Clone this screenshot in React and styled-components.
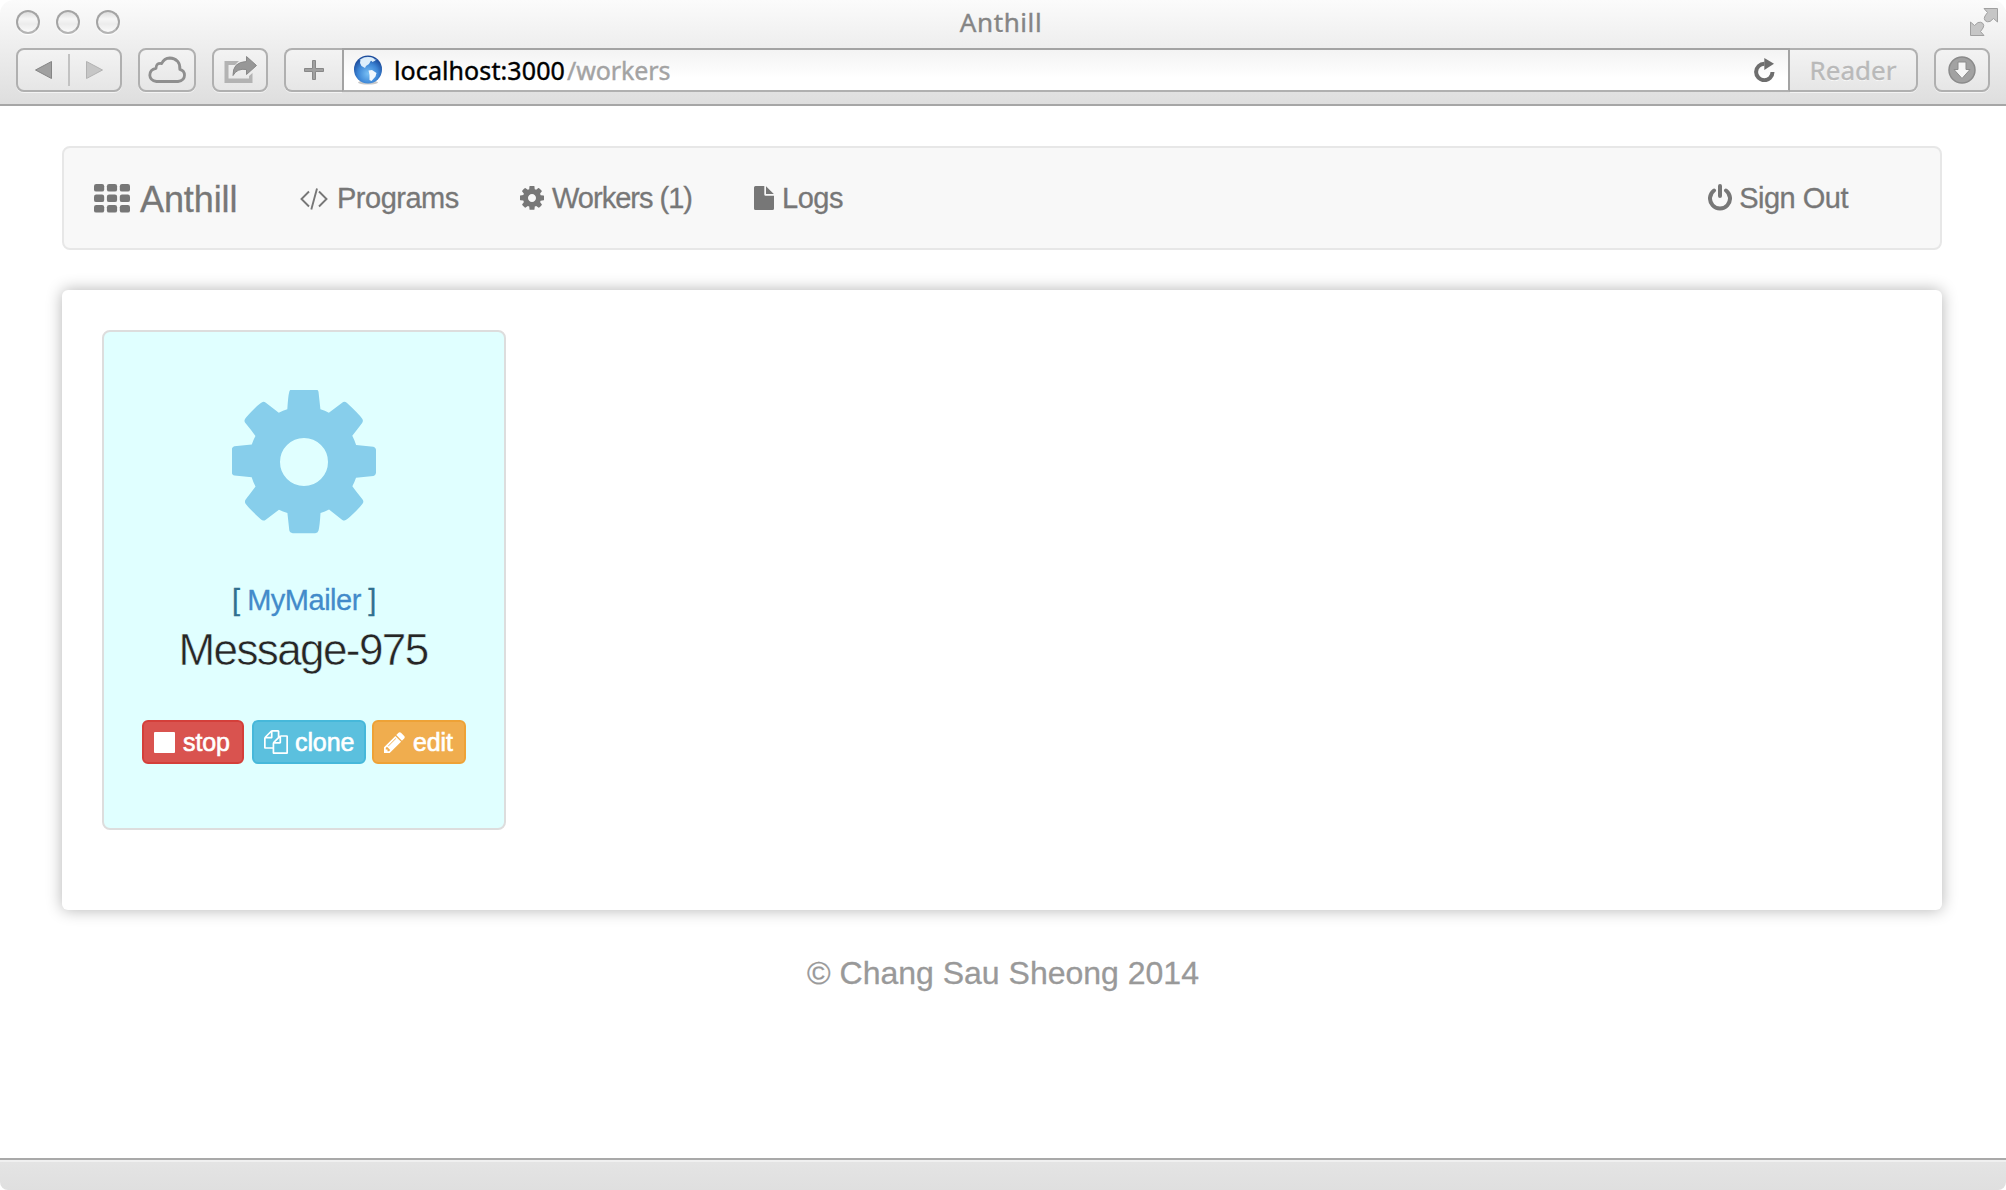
import React from "react";
import styled, { createGlobalStyle } from "styled-components";

const GlobalStyle = createGlobalStyle`
  * { box-sizing: border-box; }
  html, body { margin: 0; padding: 0; background: #fff; }
  body { font-family: "Liberation Sans", Arial, sans-serif; overflow: hidden; }
  svg { display: block; flex: none; }
`;

const Window = styled.div`
  display: flex;
  flex-direction: column;
  width: 2006px;
  height: 1190px;
  border-radius: 14px 14px 8px 8px;
  overflow: hidden;
  background: #fff;
`;

const Chrome = styled.header`
  display: flex;
  flex-direction: column;
  height: 106px;
  flex: none;
  border-bottom: 2px solid #a6a6a6;
  background: linear-gradient(#fbfbfb, #f0f0f0 38%, #dedede);
  font-family: "Noto Sans", sans-serif;
`;

const TitleBar = styled.div`
  display: grid;
  grid-template-columns: 1fr auto 1fr;
  align-items: center;
  height: 48px;
  padding: 0 4px 4px 0;
`;

const Lights = styled.div`
  display: flex;
  gap: 16px;
  padding-left: 16px;
`;

const Light = styled.span`
  width: 24px;
  height: 24px;
  border-radius: 50%;
  border: 2px solid #a4a4a4;
  border-bottom-color: #b4b4b4;
  background: linear-gradient(#dedede, #f6f6f6 35%, #ececec 60%, #fafafa);
  box-shadow: 0 1px 1px #fff;
`;

const Title = styled.div`
  font-size: 26px;
  line-height: 36px;
  letter-spacing: 0.6px;
  color: #858585;
  text-shadow: 0 1px 0 #fff;
  -webkit-text-stroke: 0.4px #858585;
`;

const TitleEnd = styled.div`
  display: flex;
  justify-content: flex-end;
  padding-right: 4px;
`;

const Toolbar = styled.div`
  display: flex;
  gap: 16px;
  height: 44px;
  padding: 0 16px;
`;

const ToolButton = styled.div`
  display: flex;
  align-items: center;
  justify-content: center;
  width: ${(p) => p.$width}px;
  height: 44px;
  border: 2px solid #b0b0b0;
  border-radius: 8px;
  background: linear-gradient(#f3f3f3, #e6e6e6);
  box-shadow: 0 1px 0 #f3f3f3;
`;

const Divider = styled.span`
  width: 2px;
  height: 32px;
  margin: 0 16px;
  background: #c2c2c2;
`;

const AddressGroup = styled.div`
  display: flex;
  flex: 1;
`;

const AddTab = styled(ToolButton)`
  border-right: 0;
  border-radius: 8px 0 0 8px;
`;

const AddressField = styled.div`
  display: flex;
  align-items: center;
  flex: 1;
  border: 2px solid #a3a3a3;
  border-bottom-color: #b0b0b0;
  background: linear-gradient(#f3f3f3, #fff 70%);
  padding: 0 13px 0 9px;
`;

const Url = styled.div`
  flex: 1;
  padding-left: 11px;
  font-size: 25px;
  line-height: 40px;
  letter-spacing: 0.1px;
  color: #000;
  -webkit-text-stroke: 0.4px currentColor;
`;

const UrlPath = styled.span`
  margin-left: 2px;
  letter-spacing: -0.1px;
  color: #a3a3a3;
`;

const Reader = styled(ToolButton)`
  border-left: 0;
  border-radius: 0 8px 8px 0;
  font-size: 26px;
  color: #b9b9b9;
  text-shadow: 0 1px 0 #fff;
  -webkit-text-stroke: 0.4px #b9b9b9;
`;

const Page = styled.main`
  display: flex;
  flex-direction: column;
  flex: 1;
  padding: 40px 64px 0 62px;
`;

const Navbar = styled.nav`
  display: flex;
  align-items: center;
  height: 104px;
  padding: 0 92px 0 30px;
  border: 2px solid #e7e7e7;
  border-radius: 8px;
  background: #f8f8f8;
  color: #777;
`;

const Brand = styled.div`
  display: flex;
  align-items: center;
  gap: 10px;
  width: 206px;
  font-size: 36px;
  line-height: 40px;
  letter-spacing: -0.1px;
  -webkit-text-stroke: 0.3px #777;
`;

const Label = styled.span`
  padding-top: ${(p) => p.$drop ?? 0}px;
`;

const NavItem = styled.div`
  display: flex;
  align-items: center;
  gap: ${(p) => p.$gap ?? 8}px;
  width: ${(p) => (p.$width ? `${p.$width}px` : "auto")};
  margin-left: ${(p) => (p.$end ? "auto" : "0")};
  font-size: 29px;
  line-height: 40px;
  letter-spacing: ${(p) => p.$track ?? -0.5}px;
  white-space: nowrap;
  -webkit-text-stroke: 0.3px #777;
`;

const Panel = styled.section`
  height: 620px;
  margin-top: 40px;
  padding: 40px;
  border-radius: 6px;
  background: #fff;
  box-shadow: 0 0 16px rgba(0, 0, 0, 0.3);
`;

const WorkerCard = styled.article`
  display: flex;
  flex-direction: column;
  align-items: center;
  width: 404px;
  height: 500px;
  padding-top: 58px;
  border: 2px solid #ddd;
  border-radius: 8px;
  background: #e0ffff;
`;

const Program = styled.div`
  margin-top: 46px;
  font-size: 29px;
  line-height: 40px;
  letter-spacing: -0.5px;
  color: #31708f;
  white-space: pre;
  -webkit-text-stroke: 0.3px currentColor;
`;

const ProgramLink = styled.span`
  color: #428bca;
`;

const WorkerName = styled.h3`
  margin: 1px 2px 0 0;
  font-size: 44px;
  font-weight: 400;
  line-height: 58px;
  letter-spacing: -1.6px;
  color: #262626;
  -webkit-text-stroke: 0.5px #e0ffff;
`;

const Actions = styled.div`
  display: flex;
  margin-top: 41px;
`;

const palette = {
  danger: ["#d9534f", "#d43f3a"],
  info: ["#5bc0de", "#46b8da"],
  warning: ["#f0ad4e", "#eea236"],
};

const ActionButton = styled.button`
  display: flex;
  align-items: center;
  gap: ${(p) => p.$gap}px;
  width: ${(p) => p.$width}px;
  height: 44px;
  margin: 0 ${(p) => p.$after ?? 0}px 0 0;
  padding: 0 0 0 10px;
  border: 2px solid ${(p) => palette[p.$tone][1]};
  border-radius: 6px;
  background: ${(p) => palette[p.$tone][0]};
  color: #fff;
  font-family: inherit;
  font-size: 25px;
  line-height: 36px;
  letter-spacing: -0.1px;
  -webkit-text-stroke: 0.6px #fff;
`;

const Footer = styled.footer`
  margin-top: 41px;
  padding-left: 2px;
  text-align: center;
  font-size: 32px;
  line-height: 44px;
  color: #999;
  -webkit-text-stroke: 0.3px #999;
`;

const StatusBar = styled.div`
  height: 32px;
  flex: none;
  border-top: 2px solid #a9a9a9;
  background: linear-gradient(#f0f0f0 2px, #e4e4e4 2px, #dfdfdf);
`;

const GearIcon = ({ size }) => (
  <svg width={size} height={size} viewBox="128 128 1536 1536" fill={size > 50 ? "#87ceeb" : "currentColor"}>
    <path d="M1152 896q0-106-75-181t-181-75-181 75-75 181 75 181 181 75 181-75 75-181zm512-109v222q0 12-8 23t-20 13l-185 19q-19 54-39 91 35 50 107 138 10 12 10 25t-9 23q-27 37-99 108t-94 71q-12 0-26-9l-138-108q-44 23-91 38-8 136-21 186-7 28-36 28h-240q-14 0-24.500-8.500t-11.500-21.500l-20-184q-49-16-90-37l-141 107q-10 9-25 9-14 0-25-11-126-114-165-168-7-10-7-23 0-12 8-23 15-21 51-66.500t54-70.500q-27-50-41-99l-183-18q-13-2-21-12.500t-8-23.500v-240q0-12 8-23t19-13l186-19q14-46 39-92-40-57-107-138-10-12-10-24 0-10 9-23 26-36 98.500-107.500t94.500-71.500q13 0 26 10l138 107q44-23 91-38 8-136 21-186 7-28 36-28h240q14 0 24.500 8.500t11.500 21.500l20 184q49 16 90 37l142-107q9-9 24-9 13 0 25 10 129 119 165 170 7 8 7 22 0 12-8 23-15 21-51 66.500t-54 70.500q26 50 41 98l183 19q13 2 21 12.500t8 23.500z" />
  </svg>
);

const GridIcon = () => (
  <svg width="36" height="29" viewBox="0 0 36 29" fill="currentColor">
    {[0, 10.5, 21].map((y) =>
      [0, 12.9, 25.8].map((x) => <rect key={`${x}-${y}`} x={x} y={y} width="10.200" height="7.600" rx="2.200" />)
    )}
  </svg>
);

const CodeIcon = () => (
  <svg width="28" height="24" viewBox="0 0 28 24" fill="none" stroke="currentColor" strokeWidth="1.900">
    <path d="M9 5.500L1.500 13L9 20.500M19 5.500L26.500 13L19 20.500M17 2.500L11.300 23.500" />
  </svg>
);

const FileIcon = () => (
  <svg width="20" height="24" viewBox="0 0 20 24" fill="currentColor">
    <path d="M1.500 0H10.300V8.500Q10.300 9.800 11.600 9.800H20V22.500Q20 24 18.500 24H1.500Q0 24 0 22.500V1.500Q0 0 1.500 0Z" />
    <path d="M12 0.200L19.800 8H12Z" />
  </svg>
);

const PowerIcon = () => (
  <svg width="24" height="28" viewBox="0 0 24 28" fill="none" stroke="currentColor" strokeWidth="4" strokeLinecap="round">
    <path d="M6 6.500A10 10 0 1 0 18 6.500M12 2V12" />
  </svg>
);

const CopyIcon = () => (
  <svg width="24" height="24" viewBox="0 0 1792 1792" fill="currentColor">
    <path d="M1696 384q40 0 68 28t28 68v1216q0 40-28 68t-68 28h-960q-40 0-68-28t-28-68v-288h-544q-40 0-68-28t-28-68v-672q0-40 20-88t48-76l408-408q28-28 76-48t88-20h416q40 0 68 28t28 68v328q68-40 128-40h416zm-544 213l-299 299h299v-299zm-640-384l-299 299h299v-299zm196 647l316-316v-416h-384v416q0 40-28 68t-68 28h-416v640h512v-256q0-40 20-88t48-76zm956 804v-1152h-384v416q0 40-28 68t-68 28h-416v640h896z" />
  </svg>
);

const PencilIcon = () => (
  <svg width="21" height="21" viewBox="128 128 1536 1536" fill="currentColor">
    <path d="M491 1536l91-91-235-235-91 91v107h128v128h107zm523-928q0-22-22-22-10 0-17 7l-542 542q-7 7-7 17 0 22 22 22 10 0 17-7l542-542q7-7 7-17zm-54-192l416 416-832 832h-416v-416zm683 96q0 53-37 90l-166 166-416-416 166-165q36-38 90-38 53 0 91 38l235 234q37 39 37 91z" />
  </svg>
);

const StopIcon = () => (
  <svg width="21" height="21" viewBox="0 0 21 21" fill="currentColor">
    <rect width="21" height="21" rx="1" />
  </svg>
);

const BackIcon = () => (
  <svg width="17" height="18" viewBox="0 0 17 18">
    <path d="M0.500 9L16.500 0.500V17.500Z" fill="#a0a0a0" stroke="#858585" />
  </svg>
);

const ForwardIcon = () => (
  <svg width="17" height="18" viewBox="0 0 17 18">
    <path d="M16.500 9L0.500 0.500V17.500Z" fill="#c6c6c6" stroke="#b2b2b2" />
  </svg>
);

const CloudIcon = () => (
  <svg width="38" height="28" viewBox="0 0 38 28" fill="none" stroke="#8f8f8f" strokeWidth="2.800" strokeLinejoin="round">
    <path d="M8.500 25.500H30Q36.500 24.500 36.500 19.200Q36.500 14.500 31.800 13.300Q32.400 8.500 29.500 5.200Q26.500 2 21.800 2Q16 2.200 13.700 7.500Q8 6.500 8 12.300Q1.800 13.500 1.800 19.200Q2 24.500 8.500 25.500Z" />
  </svg>
);

const ShareIcon = () => (
  <svg width="33" height="28" viewBox="0 0 33 28">
    <path d="M15 5H0.500V27H28.500V17L25 20V22.500H4.500V9H11Z" fill="#b3b3b3" />
    <path d="M22.500 0.500L32.500 9.500L22.500 18.500V13.500Q13 12 9 19.500Q8.500 6 22.500 5.500Z" fill="#979797" stroke="#888" />
  </svg>
);

const PlusIcon = () => (
  <svg width="20" height="20" viewBox="0 0 20 20">
    <path d="M8.500 0.500H11.500V8.500H19.500V11.500H11.500V19.500H8.500V11.500H0.500V8.500H8.500Z" fill="#a0a0a0" stroke="#888" />
  </svg>
);

const GlobeIcon = () => (
  <svg width="30" height="30" viewBox="0 0 30 30">
    <defs>
      <radialGradient id="sea" cx="50%" cy="65%" r="60%">
        <stop offset="0" stopColor="#78c0f5" />
        <stop offset="0.600" stopColor="#3d86d6" />
        <stop offset="1" stopColor="#1b4b9b" />
      </radialGradient>
    </defs>
    <ellipse cx="15" cy="27.500" rx="10" ry="2" fill="#c9c9c9" />
    <circle cx="15" cy="14.500" r="14" fill="url(#sea)" />
    <path d="M6 5Q14 -1.500 24 5Q14 7 6 5Z" fill="#c5dcf3" opacity="0.600" />
    <path d="M7.500 4.500Q14 0.500 20 3L22.500 5.500L19.500 7L18 5.500L16 9L13 11L12 13L8.500 11L7 8Z" fill="#dceefb" />
    <path d="M15.500 15.500L19 15L23.500 18L22.500 21.500L18.500 26L16.500 25V20Z" fill="#f1f8fd" />
  </svg>
);

const ReloadIcon = () => (
  <svg width="21" height="24" viewBox="0 0 21 24">
    <path d="M18.500 14A8.200 8.200 0 1 1 10.500 5.800" fill="none" stroke="#6e6e6e" strokeWidth="4" />
    <path d="M10.300 0L20 5.800L10.300 12Z" fill="#6e6e6e" />
  </svg>
);

const DownloadIcon = () => (
  <svg width="28" height="28" viewBox="0 0 28 28">
    <circle cx="14" cy="14" r="13" fill="#a2a2a2" stroke="#8b8b8b" strokeWidth="1.500" />
    <path d="M10 6H18V13.500H22L14 22.500L6 13.500H10Z" fill="#f6f6f6" stroke="#8c8c8c" />
  </svg>
);

const FullscreenIcon = () => (
  <svg width="28" height="28" viewBox="0 0 28 28" fill="#c6c6c6" stroke="#a0a0a0">
    <path d="M14 0.500H27.500V14L23.500 10.500L20 13.500Q17 14.500 15 12.500Q13.500 10.500 15 8L17.500 4.500Z" />
    <path d="M14 27.500H0.500V14L4.500 17.500L8 14.500Q11 13.500 13 15.500Q14.500 17.500 13 20L10.500 23.500Z" />
  </svg>
);

export default function App() {
  return (
    <Window>
      <GlobalStyle />
      <Chrome>
        <TitleBar>
          <Lights>
            <Light />
            <Light />
            <Light />
          </Lights>
          <Title>Anthill</Title>
          <TitleEnd>
            <FullscreenIcon />
          </TitleEnd>
        </TitleBar>
        <Toolbar>
          <ToolButton $width={106}>
            <BackIcon />
            <Divider />
            <ForwardIcon />
          </ToolButton>
          <ToolButton $width={58}>
            <CloudIcon />
          </ToolButton>
          <ToolButton $width={56}>
            <ShareIcon />
          </ToolButton>
          <AddressGroup>
            <AddTab $width={58}>
              <PlusIcon />
            </AddTab>
            <AddressField>
              <GlobeIcon />
              <Url>
                localhost:3000<UrlPath>/workers</UrlPath>
              </Url>
              <ReloadIcon />
            </AddressField>
            <Reader $width={128}>Reader</Reader>
          </AddressGroup>
          <ToolButton $width={56}>
            <DownloadIcon />
          </ToolButton>
        </Toolbar>
      </Chrome>
      <Page>
        <Navbar>
          <Brand>
            <GridIcon />
            <Label $drop={4}>Anthill</Label>
          </Brand>
          <NavItem $width={220} $gap={9}>
            <CodeIcon />
            <Label>Programs</Label>
          </NavItem>
          <NavItem $width={234} $track={-1}>
            <GearIcon size={24} />
            <Label>Workers (1)</Label>
          </NavItem>
          <NavItem>
            <FileIcon />
            <Label>Logs</Label>
          </NavItem>
          <NavItem $end $gap={7}>
            <PowerIcon />
            <Label>Sign Out</Label>
          </NavItem>
        </Navbar>
        <Panel>
          <WorkerCard>
            <GearIcon size={144} />
            <Program>
              [ <ProgramLink>MyMailer</ProgramLink> ]
            </Program>
            <WorkerName>Message-975</WorkerName>
            <Actions>
              <ActionButton $tone="danger" $width={102} $gap={8} $after={8}>
                <StopIcon />
                stop
              </ActionButton>
              <ActionButton $tone="info" $width={114} $gap={7} $after={6}>
                <CopyIcon />
                clone
              </ActionButton>
              <ActionButton $tone="warning" $width={94} $gap={8}>
                <PencilIcon />
                edit
              </ActionButton>
            </Actions>
          </WorkerCard>
        </Panel>
        <Footer>© Chang Sau Sheong 2014</Footer>
      </Page>
      <StatusBar />
    </Window>
  );
}
